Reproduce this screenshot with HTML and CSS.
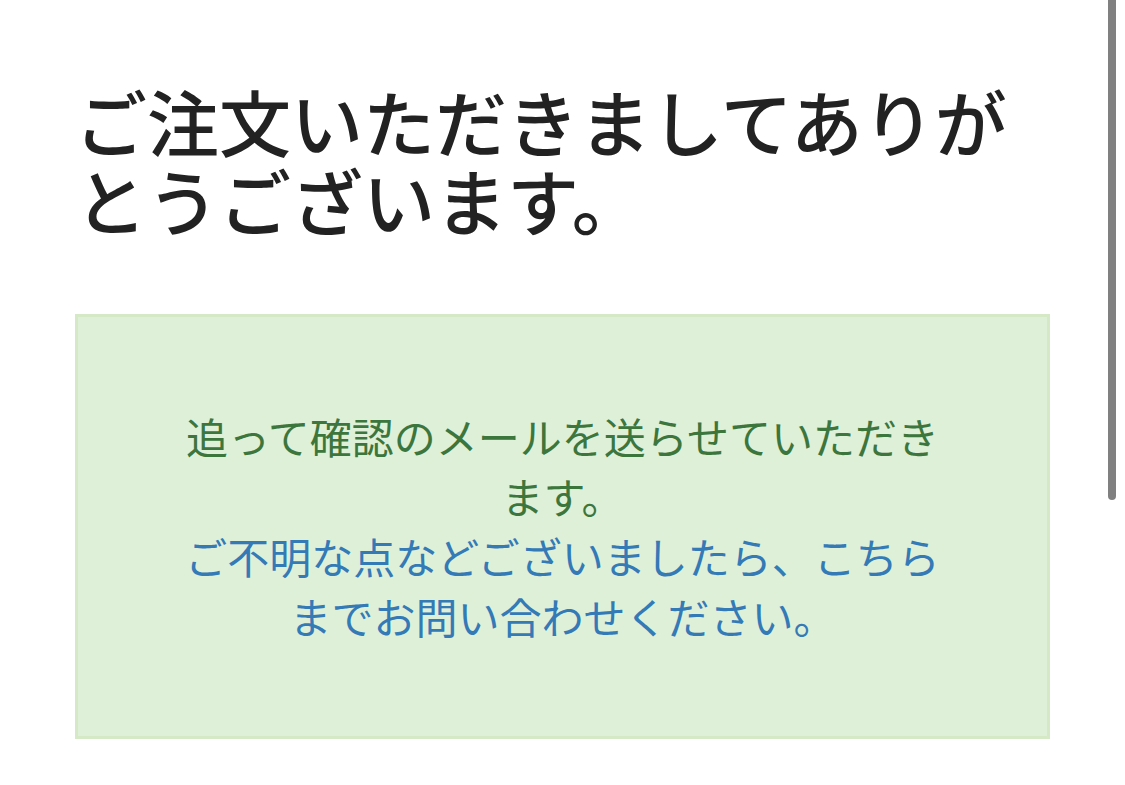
FILE: index.html
```html
<!DOCTYPE html>
<html lang="ja">
<head>
<meta charset="utf-8">
<title>ご注文ありがとうございます</title>
<link rel="stylesheet" href="styles.css">
</head>
<body>
<main class="page">
  <h2 class="title">ご注文いただきましてありがとうございます。</h2>
  <div class="alert">
    <p class="alert-text">追って確認のメールを送らせていただきます。</p>
    <p class="alert-text"><a class="alert-link" href="#">ご不明な点などございましたら、こちらまでお問い合わせください。</a></p>
  </div>
</main>
<div class="scrollbar"></div>
</body>
</html>
```
FILE: styles.css
```css
html, body {
  margin: 0;
  padding: 0;
  background: #ffffff;
}
body {
  font-family: "Noto Sans CJK JP", "Noto Sans", sans-serif;
  color: #222222;
  overflow: hidden;
}
.page {
  width: 975px;
  padding: 80px 0 0 75px;
}
.title {
  margin: 0 0 76px 0;
  font-size: 72px;
  line-height: 1.1;
  font-weight: 500;
  color: #222222;
}
.alert {
  background: #dff0d8;
  border: 3px solid #d6e9c6;
  padding: 89px 90px 90px;
  text-align: center;
  height: 240px;
}
.alert-text {
  margin: 0;
  font-size: 42px;
  line-height: 60px;
  color: #3c763d;
}
.alert-link {
  color: #337ab7;
  text-decoration: none;
}
.scrollbar {
  position: absolute;
  top: -10px;
  left: 1108px;
  width: 8px;
  height: 510px;
  border-radius: 4px;
  background: #808080;
}
```
